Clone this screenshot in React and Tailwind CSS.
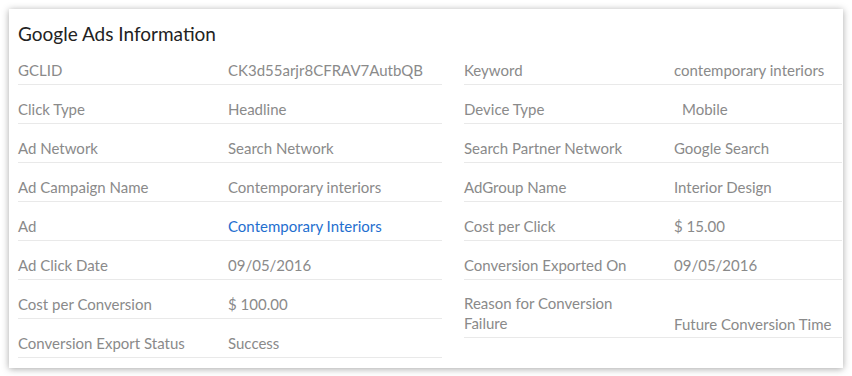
export default function App() {
  const left = [
    ['GCLID', 'CK3d55arjr8CFRAV7AutbQB'],
    ['Click Type', 'Headline'],
    ['Ad Network', 'Search Network'],
    ['Ad Campaign Name', 'Contemporary interiors'],
    ['Ad', 'Contemporary Interiors', 'link'],
    ['Ad Click Date', '09/05/2016'],
    ['Cost per Conversion', '$ 100.00'],
    ['Conversion Export Status', 'Success'],
  ]
  const right = [
    ['Keyword', 'contemporary interiors'],
    ['Device Type', 'Mobile', 'pad'],
    ['Search Partner Network', 'Google Search'],
    ['AdGroup Name', 'Interior Design'],
    ['Cost per Click', '$ 15.00'],
    ['Conversion Exported On', '09/05/2016'],
    ['Reason for Conversion Failure', 'Future Conversion Time', 'tall'],
  ]

  return (
    <div className="min-h-screen w-[852px] h-[376px] bg-white p-[9px]" style={{ fontFamily: 'Lato, "Open Sans", sans-serif' }}>
      <div className="w-[834px] h-[359px] bg-white shadow-[0_1px_7px_rgba(0,0,0,0.35)] pl-[9px]">
        <div className="h-[37px] pt-[13px] text-[19px] leading-[24px] text-[#222]">Google Ads Information</div>
        <div className="grid grid-cols-[424px_378px] gap-x-[22px] items-start">
          <div>
            {left.map(([k, v, t]) => (
              <Row key={k} label={k} value={v} kind={t} />
            ))}
          </div>
          <div>
            {right.map(([k, v, t]) => (
              <Row key={k} label={k} value={v} kind={t} />
            ))}
          </div>
        </div>
      </div>
    </div>
  )
}

function Row({ label, value, kind }) {
  if (kind === 'tall') {
    return (
      <div className="flex h-[58px] border-b border-[#e9e9e9] text-[15px] leading-[20px]">
        <div className="w-[210px] pt-[13px] pr-4 text-[#8a8a8a]">{label}</div>
        <div className="flex-1 self-end pb-[3px] text-[#8a8a8a] whitespace-nowrap">{value}</div>
      </div>
    )
  }
  return (
    <div className="flex h-[39px] border-b border-[#e9e9e9] pt-[14px] text-[15px] leading-[20px]">
      <div className="w-[210px] text-[#8a8a8a] whitespace-nowrap">{label}</div>
      <div className={`flex-1 whitespace-nowrap ${kind === 'link' ? 'text-[#1f6fcf]' : 'text-[#8a8a8a]'} ${kind === 'pad' ? 'pl-[8px]' : ''}`}>
        {value}
      </div>
    </div>
  )
}
